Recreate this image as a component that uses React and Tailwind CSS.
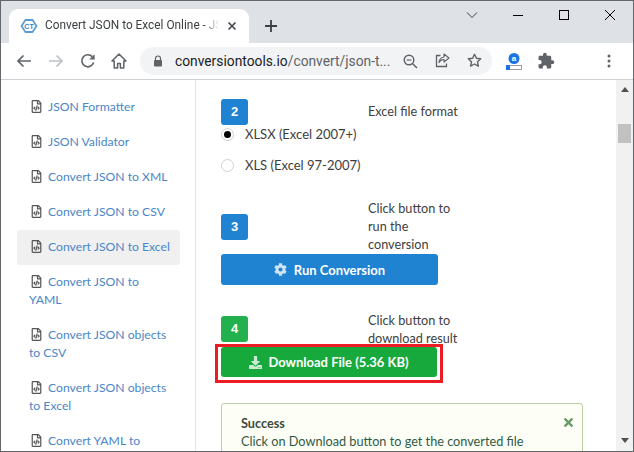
import { FaRegFileCode, FaCog, FaDownload, FaTimes } from "react-icons/fa";
import { MdExtension } from "react-icons/md";

const navItems = [
  { label: "JSON Formatter" },
  { label: "JSON Validator" },
  { label: "Convert JSON to XML" },
  { label: "Convert JSON to CSV" },
  { label: "Convert JSON to Excel", active: true },
  { label: "Convert JSON to YAML" },
  { label: "Convert JSON objects to CSV" },
  { label: "Convert JSON objects to Excel" },
  { label: "Convert YAML to JSON" },
];

function Favicon() {
  return (
    <svg width="18" height="16" viewBox="0 0 18 16" className="shrink-0">
      <path d="M5 1h8l4.5 7-4.5 7H5L.5 8z" fill="#5b9bd5" />
      <path d="M5.8 3h6.4L15.4 8l-3.2 5H5.8L2.6 8z" fill="#fff" />
      <text x="9" y="10.5" textAnchor="middle" fontSize="7" fontWeight="700" fill="#3d7fbf" fontFamily="Liberation Sans, sans-serif">CT</text>
    </svg>
  );
}

function TabBar() {
  return (
    <div className="h-[42px] bg-[#dee1e6] flex items-end pl-2 relative shrink-0">
      <div className="w-[240px] h-[34px] bg-white rounded-t-[9px] flex items-center pl-[11px] pr-[12px] font-['Roboto',sans-serif] text-[11.85px] text-[#3c4043]">
        <Favicon />
        <span className="ml-[7px] w-[176px] overflow-hidden whitespace-nowrap [mask-image:linear-gradient(to_right,black_90%,transparent_99%)]">Convert JSON to Excel Online - JSON</span>
        <svg width="10" height="10" viewBox="0 0 10 10" className="ml-[6px] shrink-0">
          <path d="M1.5 1.5l7 7M8.5 1.5l-7 7" stroke="#45494e" strokeWidth="1.7" />
        </svg>
      </div>
      <svg width="14" height="14" viewBox="0 0 14 14" className="ml-[15px] mb-[10px]">
        <path d="M7 1v12M1 7h12" stroke="#3c4043" strokeWidth="1.8" />
      </svg>
      <div className="ml-auto flex items-center self-start mt-[8px] mr-[17px]">
        <svg width="12" height="8" viewBox="0 0 12 8">
          <path d="M1 1.5l5 5 5-5" stroke="#3c4043" fill="none" strokeWidth="1" />
        </svg>
        <svg width="12" height="10" viewBox="0 0 12 10" className="ml-[34px]">
          <path d="M1 5.5h10" stroke="#000" strokeWidth="1" />
        </svg>
        <svg width="12" height="12" viewBox="0 0 12 12" className="ml-[34px]">
          <rect x="1.5" y="1.5" width="9" height="9" stroke="#000" fill="none" strokeWidth="1" />
        </svg>
        <svg width="12" height="12" viewBox="0 0 12 12" className="ml-[34px]">
          <path d="M1 1l10 10M11 1L1 11" stroke="#000" strokeWidth="1" />
        </svg>
      </div>
    </div>
  );
}

function ToolBar() {
  return (
    <div className="h-[37px] bg-white border-b border-[#cdd0d4] flex items-center shrink-0">
      <svg width="16" height="14" viewBox="0 0 16 14" className="ml-[15px]">
        <path d="M15 7H2M7.5 1.5L2 7l5.5 5.5" stroke="#5f6368" fill="none" strokeWidth="1.7" />
      </svg>
      <svg width="16" height="14" viewBox="0 0 16 14" className="ml-[16px]">
        <path d="M1 7h13M8.5 1.5L14 7l-5.5 5.5" stroke="#bdc1c6" fill="none" strokeWidth="1.7" />
      </svg>
      <svg width="16" height="16" viewBox="0 0 16 16" className="ml-[16px]">
        <path d="M13.6 9.5A6 6 0 1 1 12.2 3.6" stroke="#5f6368" fill="none" strokeWidth="1.7" />
        <path d="M14.6 1.2v5.4H9.2z" fill="#5f6368" />
      </svg>
      <svg width="16" height="16" viewBox="0 0 16 16" className="ml-[15px]">
        <path d="M8 1L1 8h2.2v7h3.4v-4.5h2.8V15h3.4V8H15z" stroke="#5f6368" fill="none" strokeWidth="1.5" strokeLinejoin="round" />
      </svg>
      <div className="ml-[13px] w-[352px] h-[28px] rounded-l-full rounded-r-full bg-[#f1f3f4] flex items-center pl-[13px] font-['Roboto',sans-serif] text-[13.8px] relative">
        <svg width="10" height="12" viewBox="0 0 10 12" className="shrink-0">
          <path d="M2.5 5V3.5a2.5 2.5 0 0 1 5 0V5" stroke="#5f6368" fill="none" strokeWidth="1.2" />
          <rect x="1" y="5" width="8" height="6.5" rx="1" fill="#5f6368" />
        </svg>
        <span className="ml-[12px] text-[#202124] whitespace-nowrap">conversiontools.io<span className="text-[#5f6368]">/convert/json-t...</span></span>
        <svg width="15" height="15" viewBox="0 0 15 15" className="absolute left-[263px] top-[7px]">
          <circle cx="6" cy="6" r="4.8" stroke="#5f6368" fill="none" strokeWidth="1.4" />
          <path d="M9.5 9.5L14 14" stroke="#5f6368" strokeWidth="1.5" />
          <path d="M3.7 6h4.6" stroke="#5f6368" strokeWidth="1.2" />
        </svg>
        <svg width="15" height="15" viewBox="0 0 15 15" className="absolute left-[295px] top-[6px]">
          <path d="M5.5 2.5H1.5v11h10v-3" stroke="#5f6368" fill="none" strokeWidth="1.3" />
          <path d="M9 1l5 4-5 4V6.5c-2.5 0-4 1-5 3 .3-3 2-5 5-5.500z" stroke="#5f6368" fill="none" strokeWidth="1.2" strokeLinejoin="round" />
        </svg>
        <svg width="15" height="15" viewBox="0 0 15 15" className="absolute left-[327px] top-[6px]">
          <path d="M7.500 1.300l1.900 4 4.300.5-3.200 3 .9 4.400-3.900-2.200-3.900 2.200.9-4.400-3.200-3 4.300-.5z" stroke="#5f6368" fill="none" strokeWidth="1.4" strokeLinejoin="round" />
        </svg>
      </div>
      <svg width="16" height="17" viewBox="0 0 16 17" className="ml-[14px]">
        <circle cx="8" cy="5.500" r="5.500" fill="#1a73e8" />
        <text x="8" y="8" textAnchor="middle" fontSize="8" fontWeight="700" fill="#fff" fontFamily="Liberation Sans, sans-serif">a</text>
        <rect x="0.500" y="12.500" width="15" height="4" fill="#fff" stroke="#80868b" strokeWidth="0.800" />
        <rect x="0" y="12" width="4" height="5" fill="#1a73e8" />
      </svg>
      <MdExtension size={18} color="#5f6368" className="ml-[15px]" />
      <svg width="4" height="14" viewBox="0 0 4 14" className="ml-[52px]">
        <circle cx="2" cy="2" r="1.500" fill="#5f6368" />
        <circle cx="2" cy="7" r="1.500" fill="#5f6368" />
        <circle cx="2" cy="12" r="1.500" fill="#5f6368" />
      </svg>
    </div>
  );
}

function Sidebar() {
  return (
    <div className="w-[195px] shrink-0 border-r border-[#e4e4e4] pt-[9.6px] pl-[16px] pr-[15px] overflow-hidden">
      {navItems.map((item) => (
        <div
          key={item.label}
          className={`pl-[12px] pr-[8.5px] py-[8.4px] rounded-[3px] leading-[18.2px] text-[12.2px] text-[#4a86c8] ${item.active ? "bg-[#f0f0f0]" : ""}`}
        >
          <FaRegFileCode size={13} color="#555" className="inline-block ml-[1px] mr-[5px] align-[-2px]" />
          {item.label}
        </div>
      ))}
    </div>
  );
}

function Badge({ children, green }) {
  return (
    <div className={`w-[27px] h-[26px] rounded-[3px] flex items-center justify-center text-white text-[13px] font-bold font-['Liberation_Sans',sans-serif] ${green ? "bg-[#22b14c]" : "bg-[#2083d2]"}`}>
      {children}
    </div>
  );
}

function Radio({ checked, children }) {
  return (
    <div className="flex items-center h-[18px] text-[13px] text-[#3d3d3d]">
      <div className="w-[13px] h-[13px] rounded-full border border-[#d0d0d0] bg-white flex items-center justify-center">
        {checked && <div className="w-[7px] h-[7px] rounded-full bg-black" />}
      </div>
      <span className="ml-[11px]">{children}</span>
    </div>
  );
}

function Main() {
  return (
    <div className="flex-1 min-w-0 pl-[25px] pr-[33px] overflow-hidden text-[12.7px] leading-[18px] text-[#404040]">
      <div className="flex h-[26px] mt-[19px]">
        <div className="w-[147px]"><Badge>2</Badge></div>
        <div className="pt-[3px]">Excel file format</div>
      </div>
      <div>
        <Radio checked>XLSX (Excel 2007+)</Radio>
        <div className="mt-[13px]"><Radio>XLS (Excel 97-2007)</Radio></div>
      </div>
      <div className="flex mt-[25px] h-[55px]">
        <div className="w-[147px] pt-[15px]"><Badge>3</Badge></div>
        <div className="w-[100px]">Click button to run the conversion</div>
      </div>
      <div className="w-[217px] h-[31px] rounded-[3px] bg-[#2083d2] text-white font-bold flex items-center justify-center text-[13px]">
        <FaCog size={13} color="#cfe4f6" className="mr-[7px]" />
        Run Conversion
      </div>
      <div className="flex mt-[25px] h-[34px]">
        <div className="w-[147px] pt-[6px]"><Badge green>4</Badge></div>
        <div className="w-[110px] pt-[1px]">Click button to download result</div>
      </div>
      <div className="ml-[-6px] w-[228px] h-[39px] border-[3px] border-[#ed1c24] pl-[3px]">
        <div className="w-[216px] h-[30px] rounded-[3px] bg-[#17a93b] text-white font-bold flex items-center justify-center text-[13px]">
          <FaDownload size={13} color="#cbead3" className="mr-[6px]" />
          Download File (5.36 KB)
        </div>
      </div>
      <div className="mt-[20px] h-[70px] rounded-[3px] border border-[#b8d0a4] bg-[#fdfff6] pl-[19px] pt-[10px] relative text-[#2f5a46]">
        <div className="font-bold text-[#3d4a3a]">Success</div>
        <div className="whitespace-nowrap">Click on Download button to get the converted file</div>
        <FaTimes size={13} color="#6b9a6b" className="absolute right-[7px] top-[12px]" />
      </div>
    </div>
  );
}

function Scrollbar() {
  return (
    <div className="w-[17px] shrink-0 bg-[#f1f1f1] flex flex-col items-center relative">
      <div className="mt-[7px] w-0 h-0 border-x-[4px] border-x-transparent border-b-[5px] border-b-[#505050]" />
      <div className="mt-[32px] w-[13px] h-[19px] bg-[#c1c1c1]" />
      <div className="mt-auto mb-[8px] w-0 h-0 border-x-[4px] border-x-transparent border-t-[5px] border-t-[#505050]" />
    </div>
  );
}

export default function App() {
  return (
    <div className="w-[634px] h-[452px] overflow-hidden border border-[#63676b] bg-white flex flex-col font-['Lato',sans-serif]">
      <TabBar />
      <ToolBar />
      <div className="flex-1 flex min-h-0">
        <Sidebar />
        <Main />
        <Scrollbar />
      </div>
    </div>
  );
}
